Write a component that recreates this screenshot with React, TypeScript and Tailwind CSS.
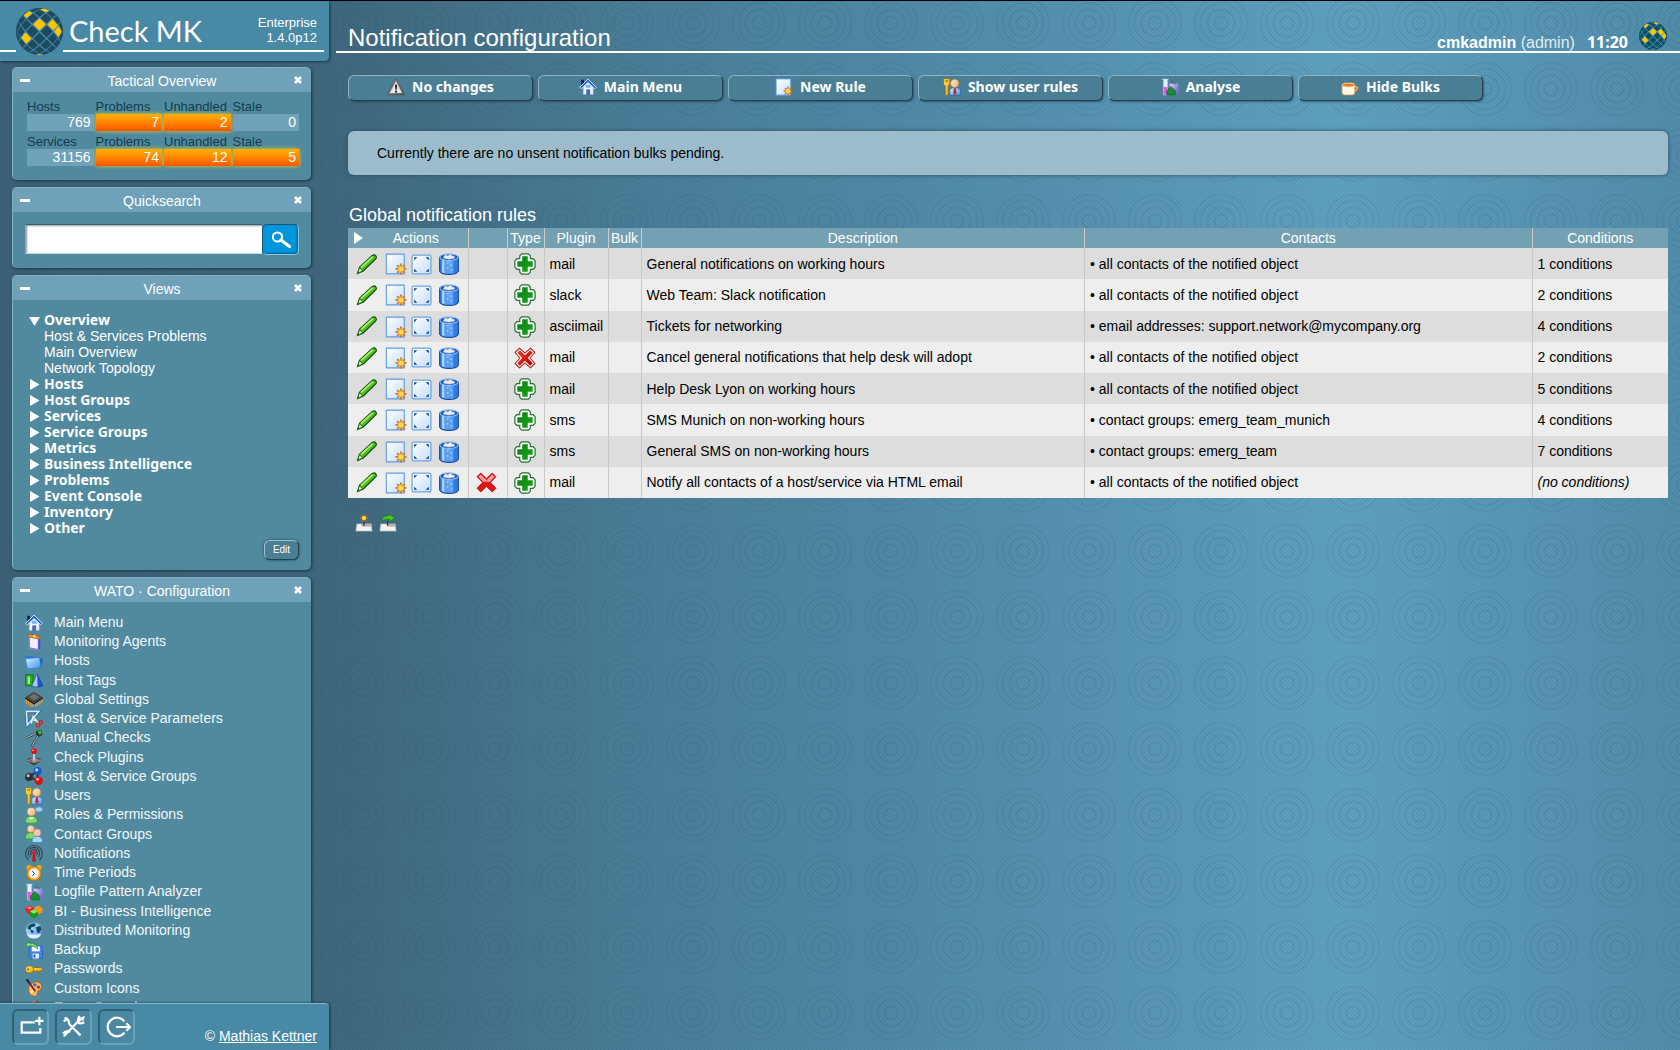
import React from 'react'
import type { ReactNode } from 'react'

function Svg({ size = 'size-[18px]', children, box = '0 0 20 20' }: { size?: string; children: ReactNode; box?: string }) {
  return (
    <svg viewBox={box} className={`${size} block shrink-0`} aria-hidden="true">
      {children}
    </svg>
  )
}

function Gradients() {
  const defs: [string, string, string][] = [
    ['gSky', '#d8efff', '#3f93ee'],
    ['gGold', '#ffe95a', '#f0a000'],
    ['gPage', '#ffffff', '#c3ddfb'],
    ['gGrey', '#c9c9c9', '#4f4f4f'],
    ['gSkin', '#fff0cf', '#edb070'],
    ['gPurple', '#ded4ff', '#6a50d8'],
    ['gPlus', '#0b7d12', '#17a81c'],
    ['gPen', '#8cf03c', '#1d8a10'],
    ['gCross', '#ff3a20', '#b00000'],
  ]
  return (
    <svg className="absolute size-0" aria-hidden="true">
      <defs>
        {defs.map(([id, a, b]) => (
          <linearGradient key={id} id={id} x1="0" y1="0" x2="1" y2="1">
            <stop offset="0" stopColor={a} />
            <stop offset="1" stopColor={b} />
          </linearGradient>
        ))}
      </defs>
    </svg>
  )
}

// Diamond tiles laid on a flat lattice, then wrapped on a sphere of radius 23.
const R = 23
const YELLOW = ['0,-1', '2,-1', '-2,1', '3,0', '-2,-3', '1,-4', '0,5']

function project(i: number, j: number) {
  const a = i * 7.3
  const b = j * 7.2
  const arc = Math.hypot(a, b) || 1
  const r = R * Math.sin(Math.min(arc / R, Math.PI / 2))
  return `${(R + (a / arc) * r).toFixed(1)},${(R + (b / arc) * r).toFixed(1)}`
}

const tiles: { key: string; points: string }[] = []
for (let i = -5; i <= 5; i++) {
  for (let j = -5; j <= 5; j++) {
    if ((i + j) % 2 === 0 || Math.hypot(i, j) > 5.1) continue
    const s = 0.87
    tiles.push({
      key: `${i},${j}`,
      points: [project(i - s, j), project(i, j - s), project(i + s, j), project(i, j + s)].join(' '),
    })
  }
}

function Globe({ size, dark, light }: { size: string; dark: string; light: string }) {
  return (
    <Svg size={size} box="0 0 46 46">
      <circle cx="23" cy="23" r="22.500" fill={light} stroke={dark} strokeWidth=".8" />
      {tiles.map((t) => (
        <polygon key={t.key} points={t.points} fill={YELLOW.includes(t.key) ? '#ffc400' : dark} />
      ))}
    </Svg>
  )
}

const home = (
  <>
    <path d="M2.500 2h3v6h-3z" fill="#0a1a70" />
    <path d="M4.500 9v9.500h4v-5.500h3.500v5.500h4V9L10.200 4z" fill="#eef5ff" stroke="#6f8fc9" strokeWidth=".8" />
    <path d="M8.500 13h3.500v5.500h-3.500z" fill="#4a63b4" />
    <path d="M7.600 7.600h5.200v3.200H7.600z" fill="#6db4ff" />
    <path d="M.8 10.200L10 1.200l9.200 9-1.800 1.800L10 5l-7.400 7z" fill="#1d63cf" stroke="#e6f1ff" strokeWidth="1" />
  </>
)
const users = (
  <>
    <path d="M.8.800h6.700v6.700l-1.700 1v9.500l-1.800 1.500-1.500-1.500V8.500l-1.700-1z" fill="url(#gGold)" stroke="#9a6400" strokeWidth=".7" />
    <path d="M2.500 2.500h3v1.500h-3z" fill="#a66a00" />
    <path d="M7.500 19v-5.500q1-3 5.500-3t6.500 3V19z" fill="url(#gSky)" stroke="#1c5fc0" strokeWidth=".7" />
    <path d="M12.200 11h2l.8 6-1.800 2-1.800-2z" fill="#d42020" />
    <circle cx="13" cy="6" r="4.600" fill="url(#gSkin)" stroke="#b98040" strokeWidth=".6" />
  </>
)
const flask = (
  <>
    <path d="M1 1h7.500l-1 1.500V19H2.500V2.500z" fill="#e2f0ff" stroke="#8cb0e0" strokeWidth=".7" />
    <path d="M3 10h4v8.500H3z" fill="#e858e8" />
    <path d="M9.500 6h9.500v12.500h-9.500z" fill="url(#gPurple)" stroke="#7088cc" strokeWidth=".7" />
    <path d="M12.500 2.500v4M15.500 4.500v3" stroke="#555" strokeWidth="1" />
    <path d="M11 9.500l2.500 2.500q4 2 2.200 6.800H6.500Q5 14 9 12z" fill="#15902c" stroke="#0b5c1a" strokeWidth=".6" />
  </>
)
const newPage = (
  <>
    <path d="M1.200 1h16.300v18H1.200z" fill="url(#gPage)" stroke="#5f9be0" strokeWidth="1" />
    <g stroke="#c8742a" strokeWidth="1.600">
      <path d="M14.500 9.500v10M9.500 14.500h10M11 11l7 7M18 11l-7 7" />
    </g>
    <circle cx="14.500" cy="14.500" r="2.800" fill="#ffd860" stroke="#e89a28" strokeWidth="1" />
  </>
)
const warning = (
  <>
    <path d="M10 1L19.500 18.500H.5z" fill="url(#gGrey)" stroke="#555" strokeWidth="1" strokeLinejoin="round" />
    <path d="M10 4.500L16.800 16.800H3.200z" fill="#e6e6e6" />
    <path d="M9 7.500h2.200l-.4 5.500H9.400zM9 14.200h2.200v2H9z" fill="#111" />
  </>
)
const cup = (
  <>
    <path d="M6 5q3-3.500 7-3M8 6q2-3 4-5.500" stroke="#666" strokeWidth="1.100" fill="none" />
    <path d="M14.500 10h4q1 3-4 5" fill="none" stroke="#b0712a" strokeWidth="2.400" />
    <path d="M14.500 10h3.500q1 3-3.500 5" fill="none" stroke="#ffeab8" strokeWidth="1" />
    <path d="M1 8v8q0 3 3 3h8.500q3 0 3-3V8z" fill="#fff8e0" stroke="#b98a48" strokeWidth=".9" />
    <ellipse cx="8.300" cy="7.800" rx="7.200" ry="2.200" fill="#e9782c" stroke="#f8dca8" strokeWidth="1" />
  </>
)

const watoItems: [string, ReactNode][] = [
  ['Main Menu', home],
  ['Monitoring Agents', (
    <>
      <path d="M4.500 4l10.500 2v12.500l-10-2z" fill="#f4f0ff" stroke="#8c7cf0" strokeWidth="1.600" />
      <path d="M15 6l2 1.500v10L15 18.500z" fill="#5a48c4" />
      <path d="M2.500 3.500Q3 1 6 1.500l10 2.300q1.500 1.200.5 3L4.500 4.500z" fill="#e8902a" stroke="#99540c" strokeWidth=".7" />
      <path d="M9 2l3 .8.200 2.200-3.200-.6z" fill="#ffe27a" />
    </>
  )],
  ['Hosts', (
    <>
      <path d="M.5 4.500h7l1.500 1.500h8V17H1.500z" fill="#2b78dc" />
      <path d="M15 6l5 2-2.500 9.500h-3z" fill="#1a5fc4" />
      <path d="M.5 7.500l15.500-1.500 1.500 9-2 3-13 .5z" fill="url(#gSky)" stroke="#2b78dc" strokeWidth=".7" />
    </>
  )],
  ['Host Tags', (
    <>
      <path d="M.5 4h8.500v12.500H.5z" fill="#25a822" stroke="#0c6b10" strokeWidth=".8" />
      <path d="M3 6h2.500v8.500H3z" fill="#a8f08c" />
      <path d="M13.500 3.500l6.500 13q-6 3-12 0z" fill="#2455d8" stroke="#0c2a8c" strokeWidth=".6" />
      <path d="M13.500 3.500l.5 14q-3 0-6-1z" fill="#a8c8ff" />
    </>
  )],
  ['Global Settings', (
    <>
      <path d="M1.500 10v5M4 12v5M6.500 13.500v5M9 14v5M12 14v5M14 12.500v5M16.500 11v5M18.800 9.500v5" stroke="#e59a38" strokeWidth="1.500" />
      <path d="M0 9.500l10 6.500 10-6.500v-1.500L10 13 0 8z" fill="#1a1a1a" />
      <path d="M10 2l10 6-10 6.500L0 8z" fill="#484848" />
      <path d="M10 4l6 4-6 3.500L4.500 8z" fill="#707070" />
    </>
  )],
  ['Host & Service Parameters', (
    <>
      <path d="M1.500 1.500h14L2.500 17z" fill="none" stroke="#245f9c" strokeWidth="3.400" />
      <path d="M1.500 1.500h14L2.500 17z" fill="none" stroke="#d4ecff" strokeWidth="1.800" />
      <path d="M7 15l2-8 7 9M9 11l4 1" stroke="#e6f3ff" strokeWidth="1.500" fill="none" />
      <g fill="none" stroke="#d02828" strokeWidth="1.500">
        <circle cx="14.500" cy="17" r="2" />
        <circle cx="17.500" cy="13.500" r="1.800" />
      </g>
    </>
  )],
  ['Manual Checks', (
    <>
      <path d="M0 10.500L15 4M7.500 19.500L16 5" stroke="#27343a" strokeWidth="2.200" />
      <path d="M0 10.300L15 3.800M7.800 19L16 5" stroke="#c6cccd" strokeWidth="1" />
      <path d="M12 2.500l6-2 1.500 6-3.500 2-3.500-2z" fill="#333" />
      <path d="M14 2.500l3.500-1 1 3.500-2.500 1.500z" fill="#35c428" />
    </>
  )],
  ['Check Plugins', (
    <>
      <path d="M1.500 14l3-3h11l3 3-8.500 5.500z" fill="#3c3c3c" />
      <path d="M1.500 14l8.500-3.500L18.500 14l-8.500 3z" fill="#8c8c8c" />
      <path d="M10 6v8" stroke="#d5d5d5" strokeWidth="2" />
      <circle cx="10" cy="3.500" r="3.200" fill="#e01515" />
      <circle cx="9" cy="2.600" r="1" fill="#ff9a9a" />
      <circle cx="6.500" cy="14" r="1" fill="#d22" />
    </>
  )],
  ['Host & Service Groups', (
    <>
      <path d="M5 10.500L14 4.500M5 11.500l10 4M14 4v11" stroke="#222" strokeWidth="1.800" />
      <circle cx="4.500" cy="11" r="4.400" fill="#2c2c2c" />
      <circle cx="3.500" cy="9.600" r="1.700" fill="#bbb" />
      <circle cx="14" cy="4.500" r="4.400" fill="#1556c8" />
      <circle cx="13" cy="3.200" r="1.800" fill="#b5d8ff" />
      <circle cx="15.200" cy="15.200" r="4.700" fill="#dc1212" />
      <circle cx="14" cy="13.700" r="1.600" fill="#ffb0b0" />
    </>
  )],
  ['Users', users],
  ['Roles & Permissions', (
    <>
      <ellipse cx="15.500" cy="3.800" rx="4.200" ry="2.900" fill="#a4ceff" stroke="#3f7cd0" strokeWidth=".7" />
      <path d="M.5 18.500q-1-7 6.500-7t6.500 7q-6.500 1.800-13 0z" fill="#7edb6a" stroke="#278a22" strokeWidth=".7" />
      <path d="M4 12.500h6l-3 3z" fill="#fff" />
      <circle cx="7" cy="6.500" r="4.500" fill="url(#gSkin)" stroke="#c08a48" strokeWidth=".6" />
    </>
  )],
  ['Contact Groups', (
    <>
      <path d="M.5 15.500q-1-7 6-7t6.500 7z" fill="#7edb6a" stroke="#278a22" strokeWidth=".7" />
      <circle cx="6.500" cy="4.500" r="3.900" fill="url(#gSkin)" stroke="#c08a48" strokeWidth=".6" />
      <path d="M8 19.500q-1-7 5.500-7t6 7z" fill="#a5d2ff" stroke="#2b6cd0" strokeWidth=".7" />
      <circle cx="13.500" cy="8.500" r="4.100" fill="#f8c8b4" stroke="#c07a60" strokeWidth=".6" />
    </>
  )],
  ['Notifications', (
    <>
      <g fill="none" stroke="#2b4650" strokeWidth="1.200">
        <path d="M4 18A9.300 9.300 0 1 1 16 18" />
        <path d="M5.500 14.500a6.300 6.300 0 1 1 9 0" />
        <path d="M7.300 12a3.600 3.600 0 1 1 5.400 0" />
      </g>
      <path d="M9 10h2l1 9.500H8z" fill="#c91414" />
      <circle cx="10" cy="9.500" r="2.200" fill="#e31818" />
    </>
  )],
  ['Time Periods', (
    <>
      <path d="M4.500 16l-2 3M15.500 16l2 3" stroke="#b87a00" strokeWidth="1.800" />
      <circle cx="4.500" cy="4" r="3" fill="#f2a81a" />
      <circle cx="15.500" cy="4" r="3" fill="#f2a81a" />
      <circle cx="10" cy="10.500" r="7.800" fill="#f8ab1e" stroke="#b06c00" strokeWidth=".8" />
      <circle cx="10" cy="10.500" r="5.500" fill="#eef4ff" />
      <path d="M8 8l2.500 2.500L8.500 13" stroke="#333" strokeWidth="1.100" fill="none" />
    </>
  )],
  ['Logfile Pattern Analyzer', flask],
  ['BI - Business Intelligence', (
    <>
      <path d="M.5 7L5 4l4.500 2v5L5 14 1 11.500z" fill="#e32626" />
      <path d="M10.500 6L15 4l4.500 3v4.500L15 14l-4.500-2.500z" fill="#f09a18" />
      <path d="M5.500 10.500L10 8l4.500 2.500v5L10 18.500l-4.500-3z" fill="#1c9a1c" />
      <path d="M5.500 10.500L10 8l4.500 2.500L10 13z" fill="#84e46c" />
      <path d="M2 6.500L5 5l3 1.500-3 1.500z" fill="#ff8c8c" />
    </>
  )],
  ['Distributed Monitoring', (
    <>
      <circle cx="10" cy="10.500" r="9.200" fill="url(#gSky)" stroke="#5f87ad" strokeWidth=".8" />
      <path d="M3 6q4-4.500 9-3l-1 3-4 1-1 3-3-1zM12 7l5-1.500 1.500 4-3 4-2-1zM6 9.500l4 1.500-1.500 2.500-2-1z" fill="#12485a" />
      <path d="M2 14.500q8 1.500 16 0-2 5-8 5t-8-5z" fill="#f4fbff" opacity=".85" />
    </>
  )],
  ['Backup', (
    <>
      <path d="M4.500 5.500h15V19.500h-14l-1-1z" fill="#3f83ec" stroke="#1f4fae" strokeWidth=".6" />
      <path d="M7.500 6h9v5.500h-9z" fill="#f2f7ff" />
      <path d="M8.500 14h7v5.500h-7z" fill="#e5ecf8" />
      <path d="M9.500 15h2v3.500h-2z" fill="#2452a8" />
      <path d="M.5 4L5 .5v2q7-.5 9 5v1.500q-3-4-9-3.500v2z" fill="#7fe07a" stroke="#1e7a28" strokeWidth=".7" />
    </>
  )],
  ['Passwords', (
    <>
      <path d="M8 8.500h10l1.500 2-1.500 1.500h-2v2h-1.500v-2H13v1.500h-1.500V12H8z" fill="url(#gGold)" stroke="#8f5a00" strokeWidth=".7" />
      <ellipse cx="5" cy="10.500" rx="4.500" ry="4" fill="url(#gGold)" stroke="#8f5a00" strokeWidth=".7" />
      <circle cx="3.300" cy="10.500" r="1.200" fill="#518a9f" />
    </>
  )],
  ['Custom Icons', (
    <>
      <path d="M4 10Q6 4 13 3q6 1 5.500 6-1 4-5 5 1 4-2.500 5.500Q3 18 4 10z" fill="#f8b860" stroke="#9a5c14" strokeWidth=".8" />
      <circle cx="11" cy="6.500" r="1.900" fill="#2a6de0" />
      <circle cx="15" cy="9" r="1.900" fill="#dc2020" />
      <circle cx="7.500" cy="14" r="1.600" fill="#fff0c0" />
      <path d="M2 .5l9.500 13" stroke="#7c1414" strokeWidth="1.800" />
      <path d="M2 .5l3 4" stroke="#222" strokeWidth="2" />
    </>
  )],
  ['Event Console', (
    <>
      <path d="M12 1l3 3v9l-3 4z" fill="#8a5a50" />
      <path d="M4 7l8-6v14l-8-4z" fill="url(#gGrey)" />
    </>
  )],
]

const pencil = (
  <>
    <path d="M1.500 18.500l2-6L15.500 1.500q2-1.300 3.200 0t.3 3L7 16.200z" fill="url(#gPen)" stroke="#0d4f0c" strokeWidth="1.100" />
    <path d="M4.800 12.800L16 2.600" stroke="#a8f46c" strokeWidth="1.600" />
    <path d="M1.500 18.500l1.800-5.500 3.200 3z" fill="#d8f0a8" stroke="#0d4f0c" strokeWidth=".7" />
    <path d="M1.200 19l1-2.800 1.600 1.600z" fill="#173" />
  </>
)
const move = (
  <>
    <rect x="1" y="1" width="18" height="18" fill="url(#gPage)" stroke="#6ba6e8" strokeWidth="1.200" rx="1.500" />
    <g fill="#1b3f66">
      <path d="M3 3h3L3 6zM17 3v3l-3-3zM17 17h-3l3-3zM3 17v-3l3 3z" />
    </g>
  </>
)
const trash = (
  <>
    <path d="M1.500 3.500v13q1 3 8.500 3t8.500-3v-13z" fill="#2d7ce6" stroke="#0d3c98" strokeWidth=".9" />
    <path d="M3.500 5.500h2.500v13L3.500 17.500z" fill="#a5d2ff" />
    <path d="M6.500 6.500h7.500v12.200H6.500z" fill="#5fa0ee" />
    <path d="M8 9h1.500M11 11h1.500M8 13.500h1.500M11.500 15.500H13M10 8h1" stroke="#b5d6ff" strokeWidth="1" />
    <ellipse cx="10" cy="3.800" rx="8.300" ry="3" fill="#1556bc" stroke="#8cc0fa" strokeWidth="1" />
    <path d="M4.500 4.500l2-3 2.500 1L11 .8l2 1.700 2 .5.500 1.500Q10 7 4.500 4.500z" fill="#e9edf2" stroke="#8d99a8" strokeWidth=".5" />
  </>
)
const plus = (
  <>
    <path d="M7 .8h6l1.800 1.700V5.200h2.700L19.200 7v6l-1.700 1.800h-2.700v2.700L13 19.200H7l-1.800-1.700v-2.700H2.500L.8 13V7l1.700-1.800h2.700V2.500z" fill="#fff" stroke="#24722c" strokeWidth="1.100" />
    <path d="M7.500 3h5v4.500H17v5h-4.500V17h-5v-4.500H3v-5h4.500z" fill="url(#gPlus)" />
  </>
)
const crossOutlined = (
  <>
    <path d="M5 1l5 4.500L15 1l4 4-4.500 5L19 15l-4 4-5-4.500L5 19l-4-4 4.500-5L1 5z" fill="#fff" stroke="#b02020" strokeWidth="1" strokeLinejoin="round" />
    <path d="M5.200 3L10 7.500 14.800 3 17 5.200 12.500 10l4.500 4.800-2.200 2.200-4.800-4.500L5.200 17 3 14.800 7.500 10 3 5.200z" fill="url(#gCross)" />
  </>
)
const cross = (
  <>
    <path d="M4.500 1L10 6.300 15.500 1 19 4.500 13.700 10l5.300 5.500-3.500 3.500-5.500-5.300L4.500 19 1 15.500 6.300 10 1 4.500z" fill="#e81414" stroke="#a80808" strokeWidth=".8" strokeLinejoin="round" />
    <path d="M4.500 2.300l5.500 5.400 5.500-5.400 2.200 2.200-4.500 4.700H6.800L2.300 4.500z" fill="#ff9a9a" />
  </>
)

function Snapin({ title, children, fill }: { title: string; children: ReactNode; fill?: boolean }) {
  return (
    <section className={`w-[299px] shrink-0 overflow-hidden rounded-[5px] border-t border-l border-[#83b2c5] bg-[#518a9f] shadow-[1px_1px_3px_#1d3542] ${fill ? 'rounded-b-none' : ''}`}>
      <header className="flex h-6 items-center bg-[#6fa2b8] pr-[9px] pl-[7px] text-white">
        <button type="button" aria-label={`Minimise ${title}`} className="h-2.5 w-2.5">
          <span className="block h-[3px] w-2.5 bg-white" />
        </button>
        <h2 className="flex-1 pt-px text-center text-[14px] leading-6">{title}</h2>
        <button type="button" aria-label={`Close ${title}`} className="size-2">
          <Svg size="size-2" box="0 0 8 8"><path d="M1 1l6 6M7 1L1 7" stroke="#fff" strokeWidth="2.600" /></Svg>
        </button>
      </header>
      {children}
    </section>
  )
}

const hot = 'bg-linear-to-b from-[#ffb000] to-[#ff5200] shadow-[0_0_4px_#e8d020]'
const cool = 'bg-[#6fa2b8]'

function TacticalOverview() {
  const rows: [string, [string, boolean][]][] = [
    ['Hosts', [['769', false], ['7', true], ['2', true], ['0', false]]],
    ['Services', [['31156', false], ['74', true], ['12', true], ['5', true]]],
  ]
  return (
    <Snapin title="Tactical Overview">
      <table className="mx-3 mt-1 mb-3.5 w-[276px] table-fixed border-separate border-spacing-x-0.5 border-spacing-y-0 text-[14px]">
        {rows.map(([name, cells]) => (
          <tbody key={name}>
            <tr>
              {[name, 'Problems', 'Unhandled', 'Stale'].map((l) => (
                <th key={l} scope="col" className="h-[18px] p-0 pt-[3px] text-left text-[13px] leading-[15px] font-normal whitespace-nowrap text-[#123c4e]">{l}</th>
              ))}
            </tr>
            <tr>
              {cells.map(([v, isHot], i) => (
                <td key={i} className={`h-[17px] p-0 pr-[3px] text-right leading-[17px] ${isHot ? hot : cool}`}>
                  <a href="#" className="text-white">{v}</a>
                </td>
              ))}
            </tr>
          </tbody>
        ))}
      </table>
    </Snapin>
  )
}

function Quicksearch() {
  return (
    <Snapin title="Quicksearch">
      <form className="flex px-3 pt-3 pb-[13px]">
        <input aria-label="Quicksearch" className="h-[30px] min-w-0 flex-1 border border-t-[#3e5c69] border-r-0 border-b-[#c5d9e2] border-l-[#8aa5b0] bg-white px-1 text-[14px] shadow-[inset_1px_1px_2px_#8a9a9f] outline-none" />
        <button type="button" aria-label="Search" className="flex h-[31px] w-[37px] items-center justify-center rounded-[5px] border border-t-[#1a5877] border-r-[#8fc4dc] border-b-[#8fc4dc] border-l-[#1a5877] bg-[#0096dc] shadow-[inset_-1px_-1px_2px_#005f95]">
          <Svg size="size-5">
            <circle cx="6.500" cy="7" r="4.600" fill="none" stroke="#fff" strokeWidth="2" />
            <path d="M10 10l8.500 6.500" stroke="#fff" strokeWidth="3.200" strokeLinecap="round" />
          </Svg>
        </button>
      </form>
    </Snapin>
  )
}

const folders = ['Hosts', 'Host Groups', 'Services', 'Service Groups', 'Metrics', 'Business Intelligence', 'Problems', 'Event Console', 'Inventory', 'Other']

function Folder({ name, open }: { name: string; open?: boolean }) {
  return (
    <button type="button" className="flex h-4 items-center gap-1 font-['Noto_Sans',sans-serif] text-[14px] leading-4 font-bold">
      <Svg size="size-[11px]" box="0 0 11 11">
        <path d={open ? 'M0 2h11L5.500 11z' : 'M1 0l9.500 5.500L1 11z'} fill="#fff" />
      </Svg>
      {name}
    </button>
  )
}

function Views() {
  return (
    <Snapin title="Views">
      <div className="px-4 pt-3 pb-2.5 text-white">
        <ul className="text-[14px] leading-4">
          <li>
            <Folder name="Overview" open />
            <ul className="pl-[15px]">
              {['Host & Services Problems', 'Main Overview', 'Network Topology'].map((v) => (
                <li key={v}><a href="#" className="block">{v}</a></li>
              ))}
            </ul>
          </li>
          {folders.map((f) => (
            <li key={f}><Folder name={f} /></li>
          ))}
        </ul>
        <div className="-mr-1 flex justify-end pt-1">
          <button type="button" className="h-5 w-[35px] rounded-[6px] border border-t-[#9dc0ce] border-r-[#24404e] border-b-[#24404e] border-l-[#9dc0ce] bg-[#4a7e95] text-[10px] leading-4 shadow-[0_0_3px_#24404e]">Edit</button>
        </div>
      </div>
    </Snapin>
  )
}

function Wato() {
  return (
    <Snapin title="WATO · Configuration" fill>
      <ul className="mx-3 mt-[11px] grid h-[404px] auto-rows-fr text-[14px] text-[#f2f8fa]">
        {watoItems.map(([name, icon]) => (
          <li key={name}>
            <a href="#" className="flex items-center gap-[11px]">
              <Svg>{icon}</Svg>
              <span className="leading-[19px]">{name}</span>
            </a>
          </li>
        ))}
      </ul>
    </Snapin>
  )
}

const footerButtons: [string, ReactNode][] = [
  ['Add snapin', <path d="M19 9H5v11h20v-5M24 3v9M19.500 7.500h9" />],
  ['Edit profile', <path d="M5 4l4 3 1 4 12 12M4 24l4-4 14-15M22 5l3-1-1 3M20 8l4-4M3 21q4-4 8-2M26 9q-5 2-7 0 0-4 2-7M4 8l4-4" />],
  ['Logout', <path d="M23 8A10 10 0 1 0 23 20M14 14h15M25 10l4 4-4 4" />],
]

function Sidebar() {
  return (
    <aside className="flex h-full w-[329px] shrink-0 flex-col">
      <header className="flex h-[60px] shrink-0 items-start rounded-br-[4px] bg-[#4889a6] shadow-[1px_1px_3px_#1d3542]">
        <div className="mt-[49px] h-0.5 w-4 bg-white" />
        <a href="#" aria-label="Check MK" className="mt-[7px]">
          <Globe size="size-[47px]" dark="#1c4a60" light="#4889a6" />
        </a>
        <div className="mr-[5px] flex h-[51px] flex-1 items-center justify-between border-b-2 border-white pr-[7px] pl-1.5 text-white">
          <h1 className="mt-2.5 font-['Lato',sans-serif] text-[29px] leading-9">Check MK</h1>
          <p className="mt-2 text-right text-[13px] leading-[15px]">Enterprise<br />1.4.0p12</p>
        </div>
      </header>
      <div className="flex min-h-0 flex-1 flex-col gap-[7px] overflow-hidden pt-[6px] pl-3">
        <TacticalOverview />
        <Quicksearch />
        <Views />
        <Wato />
      </div>
      <footer className="flex h-[47px] shrink-0 items-center gap-1.5 rounded-tr-[4px] border-t border-[#84b5c8] bg-[#4889a6] pr-3 pl-3 text-white shadow-[1px_0_3px_#1d3542]">
        {footerButtons.map(([label, icon]) => (
          <button key={label} type="button" aria-label={label} className="flex h-9 w-[37px] items-center justify-center rounded-[6px] border-2 border-t-[#2f6179] border-r-[#6aa3b9] border-b-[#6aa3b9] border-l-[#2f6179] bg-[#4a87a0]">
            <svg viewBox="0 0 30 28" className="h-[26px] w-7" fill="none" stroke="#fff" strokeWidth="2.400">{icon}</svg>
          </button>
        ))}
        <p className="mt-[18px] flex-1 text-right text-[14px] leading-4">© <a href="#" className="underline">Mathias Kettner</a></p>
      </footer>
    </aside>
  )
}

const toolbar: [string, ReactNode][] = [
  ['No changes', warning],
  ['Main Menu', home],
  ['New Rule', newPage],
  ['Show user rules', users],
  ['Analyse', flask],
  ['Hide Bulks', cup],
]

const all = 'all contacts of the notified object'
const rules: [string, string, string, string, boolean][] = [
  ['mail', 'General notifications on working hours', all, '1 conditions', true],
  ['slack', 'Web Team: Slack notification', all, '2 conditions', true],
  ['asciimail', 'Tickets for networking', 'email addresses: support.network@mycompany.org', '4 conditions', true],
  ['mail', 'Cancel general notifications that help desk will adopt', all, '2 conditions', false],
  ['mail', 'Help Desk Lyon on working hours', all, '5 conditions', true],
  ['sms', 'SMS Munich on non-working hours', 'contact groups: emerg_team_munich', '4 conditions', true],
  ['sms', 'General SMS on non-working hours', 'contact groups: emerg_team', '7 conditions', true],
  ['mail', 'Notify all contacts of a host/service via HTML email', all, '(no conditions)', true],
]

function RulesTable() {
  return (
    <table className="h-[270px] w-full table-fixed border-collapse text-[14px] text-black">
      <colgroup>
        <col className="w-[120px]" /><col className="w-[39px]" /><col className="w-[37px]" /><col className="w-16" />
        <col className="w-[33px]" /><col className="w-[33.6%]" /><col /><col className="w-[136px]" />
      </colgroup>
      <thead>
        <tr className="h-5 bg-[#73a1b3] text-white [&>th]:border-r [&>th]:border-[#c9c9c9] [&>th]:p-0 [&>th]:leading-5 [&>th]:font-normal [&>th:last-child]:border-r-0">
          <th scope="col">
            <span className="flex items-center pl-1.5">
              <button type="button" aria-label="Show row options"><Svg size="size-3" box="0 0 12 12"><path d="M0 0l9 6-9 6z" fill="#fff" /></Svg></button>
              <span className="flex-1 pr-0.5 text-center">Actions</span>
            </span>
          </th>
          <th scope="col" aria-label="Warning" />
          <th scope="col">Type</th>
          <th scope="col">Plugin</th>
          <th scope="col">Bulk</th>
          <th scope="col">Description</th>
          <th scope="col">Contacts</th>
          <th scope="col">Conditions</th>
        </tr>
      </thead>
      <tbody>
        {rules.map(([plugin, desc, contacts, cond, positive], i) => (
          <tr key={desc} className="odd:bg-[#dddddd] even:bg-[#eeeeee] [&>td]:border-r [&>td]:border-[#c9c9c9] [&>td]:p-0 [&>td]:pt-px [&>td]:pl-[5px] [&>td:last-child]:border-r-0">
            <td>
              <div className="flex items-center pl-[3px]">
                <button type="button" aria-label="Edit rule"><Svg size="size-[21px]">{pencil}</Svg></button>
                <button type="button" aria-label="Copy rule" className="ml-2"><Svg size="size-[22px]">{newPage}</Svg></button>
                <button type="button" aria-label="Move rule" className="ml-1"><Svg size="size-[21px]">{move}</Svg></button>
                <button type="button" aria-label="Delete rule" className="ml-1.5"><Svg size="size-[22px]">{trash}</Svg></button>
              </div>
            </td>
            <td>{i === 7 && <span className="flex pl-0.5"><Svg size="size-[21px]">{cross}</Svg></span>}</td>
            <td><span className="flex pl-px"><Svg size="size-[22px]">{positive ? plus : crossOutlined}</Svg></span></td>
            <td>{plugin}</td>
            <td />
            <td>{desc}</td>
            <td>
              <ul><li>• {contacts}</li></ul>
            </td>
            <td>{cond.startsWith('(') ? <i>{cond}</i> : cond}</td>
          </tr>
        ))}
      </tbody>
    </table>
  )
}

export default function App() {
  return (
    <div className="flex h-screen w-full overflow-hidden border-t border-black bg-[radial-gradient(circle_at_33px_33px,transparent_5px,rgba(40,70,90,0.1)_6px,rgba(40,70,90,0.1)_7px,transparent_8px,transparent_12px,rgba(40,70,90,0.1)_13px,rgba(40,70,90,0.1)_14px,transparent_15px,transparent_19px,rgba(40,70,90,0.1)_20px,transparent_22px,transparent_25px,rgba(40,70,90,0.1)_26px,transparent_28px),linear-gradient(135deg,rgba(10,40,60,0.1)_12.5%,transparent_12.5%_50%,rgba(10,40,60,0.1)_50%_62.5%,transparent_62.5%),linear-gradient(90deg,#3c6177_0%,#40687e_20%,#497d96_37%,#518ba9_55%,#5fa1c1_80%,#528dab_100%)] bg-[length:66px_66px,4px_4px,auto] bg-[position:0_-11px,0_0,0_0] font-['Liberation_Sans',Arial,sans-serif]">
      <Gradients />
      <Sidebar />
      <main className="min-w-0 flex-1 pl-[7px] text-white">
        <header className="flex h-[52px] items-end border-b-2 border-white pr-[13px] pl-3">
          <h1 className="flex-1 text-[24px] leading-[26px]">Notification configuration</h1>
          <p className="text-[16px] leading-4">
            <b className="font-bold">cmkadmin</b> <span className="text-[#e0edf3]">(admin)</span>
            <b className="ml-3 font-['Noto_Sans',sans-serif]">11:20</b>
          </p>
          <a href="#" aria-label="Check MK" className="mb-px ml-[11px]">
            <Globe size="size-7" dark="#085066" light="#5895b3" />
          </a>
        </header>
        <div className="pr-3 pl-3">
          <nav className="flex gap-[5px] pt-[22px] font-['Noto_Sans',sans-serif] text-[14px] leading-5 font-bold">
            {toolbar.map(([label, icon]) => (
              <a key={label} href="#" className="flex h-[26px] w-[185px] items-center justify-center gap-[7px] rounded-[6px] border border-t-[#8fb4c3] border-r-[#24404e] border-b-[#24404e] border-l-[#8fb4c3] bg-[#4a7e95] pb-[3px] shadow-[1px_1px_2px_rgba(20,45,60,0.5)]">
                <Svg>{icon}</Svg>
                {label}
              </a>
            ))}
          </nav>
          <p className="mt-[30px] rounded-[6px] bg-[#9cbccd] px-[29px] py-3 text-[14px] leading-5 text-black shadow-[0_0_4px_#2c4f60]">
            Currently there are no unsent notification bulks pending.
          </p>
          <h2 className="mt-[29px] pb-0.5 pl-px text-[18px] leading-[22px]">Global notification rules</h2>
          <RulesTable />
          <div className="flex gap-1.5 pt-4 pl-[7px]">
            <button type="button" aria-label="New rule">
              <Svg>
                <path d="M2 11h16l1 8H1z" fill="#f2f2f2" stroke="#b5b5b5" strokeWidth=".8" />
                <path d="M7 11h11v3H7z" fill="#b0b0b0" />
                <path d="M10 8v5" stroke="#333" strokeWidth="1.500" />
                <path d="M10 0v9M5.500 4.500h9M7 1.500l6 6M13 1.500l-6 6" stroke="#b86a18" strokeWidth="1.300" />
                <circle cx="10" cy="4.500" r="2.400" fill="#ffd84a" />
              </Svg>
            </button>
            <button type="button" aria-label="Move rules">
              <Svg>
                <path d="M2 11h16l1 8H1z" fill="#f2f2f2" stroke="#b5b5b5" strokeWidth=".8" />
                <path d="M9 11h9v3H9z" fill="#b0b0b0" />
                <path d="M9.500 8v5" stroke="#333" strokeWidth="1.500" />
                <path d="M3 8Q4 1.500 11 2V0l6.500 4.500L12 8.500V6Q7 5 3 8z" fill="#42cc22" stroke="#14780e" strokeWidth=".7" />
              </Svg>
            </button>
          </div>
        </div>
      </main>
    </div>
  )
}
